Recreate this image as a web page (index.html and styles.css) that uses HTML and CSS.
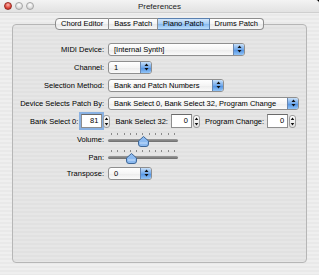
FILE: index.html
```html
<!DOCTYPE html>
<html lang="en">
<head>
  <meta charset="UTF-8">
  <title>Preferences</title>
  <link rel="stylesheet" href="styles.css">
</head>
<body>
  <div class="window">
    <div class="titlebar">
      <div class="lights">
        <span class="light close"></span>
        <span class="light"></span>
        <span class="light"></span>
      </div>
      <div class="title">Preferences</div>
      <div></div>
    </div>

    <div class="tabs">
      <div class="tab first">Chord Editor</div>
      <div class="tab">Bass Patch</div>
      <div class="tab selected">Piano Patch</div>
      <div class="tab last">Drums Patch</div>
    </div>

    <div class="panel">
      <div class="form">
        <label>MIDI Device:</label>
        <div class="popup w-device">
          <span>[Internal Synth]</span>
          <i class="cap"><svg width="5" height="8" viewBox="0 0 5 8"><path d="M2.5 0.5 L4.5 3 H0.5 Z M2.5 7.5 L4.5 5 H0.5 Z" fill="#111"/></svg></i>
        </div>

        <label>Channel:</label>
        <div class="popup w-small">
          <span>1</span>
          <i class="cap"><svg width="5" height="8" viewBox="0 0 5 8"><path d="M2.5 0.5 L4.5 3 H0.5 Z M2.5 7.5 L4.5 5 H0.5 Z" fill="#111"/></svg></i>
        </div>

        <label>Selection Method:</label>
        <div class="popup w-method">
          <span>Bank and Patch Numbers</span>
          <i class="cap"><svg width="5" height="8" viewBox="0 0 5 8"><path d="M2.5 0.5 L4.5 3 H0.5 Z M2.5 7.5 L4.5 5 H0.5 Z" fill="#111"/></svg></i>
        </div>

        <label>Device Selects Patch By:</label>
        <div class="popup w-wide">
          <span>Bank Select 0, Bank Select 32, Program Change</span>
          <i class="cap"><svg width="5" height="8" viewBox="0 0 5 8"><path d="M2.5 0.5 L4.5 3 H0.5 Z M2.5 7.5 L4.5 5 H0.5 Z" fill="#111"/></svg></i>
        </div>

        <div class="bank-row">
          <div class="spin">
            <label>Bank Select 0:</label>
            <div class="field focus">81</div>
            <div class="stepper"><svg width="5" height="11" viewBox="0 0 5 11"><path d="M2.5 1.5 L4.3 4 H0.7 Z M2.5 9.5 L4.3 7 H0.7 Z" fill="#111"/></svg></div>
          </div>
          <div class="spin">
            <label>Bank Select 32:</label>
            <div class="field">0</div>
            <div class="stepper"><svg width="5" height="11" viewBox="0 0 5 11"><path d="M2.5 1.5 L4.3 4 H0.7 Z M2.5 9.5 L4.3 7 H0.7 Z" fill="#111"/></svg></div>
          </div>
          <div class="spin">
            <label>Program Change:</label>
            <div class="field">0</div>
            <div class="stepper"><svg width="5" height="11" viewBox="0 0 5 11"><path d="M2.5 1.5 L4.3 4 H0.7 Z M2.5 9.5 L4.3 7 H0.7 Z" fill="#111"/></svg></div>
          </div>
        </div>

        <label>Volume:</label>
        <div class="slider">
          <div class="ticks"><b></b><b></b><b></b><b></b><b></b><b></b><b></b><b></b><b></b><b></b><b></b></div>
          <div class="track"></div>
          <svg class="knob" style="left: 30px" width="11" height="11" viewBox="0 0 11 11"><path d="M5.5 0.5 L10.5 5 V8 Q10.5 10.5 8 10.5 H3 Q0.5 10.5 0.5 8 V5 Z" fill="#8cbaf0" stroke="#3f6797"/><path d="M2 7 H9" stroke="#c9e0fb" stroke-width="1"/></svg>
        </div>

        <label>Pan:</label>
        <div class="slider">
          <div class="ticks"><b></b><b></b><b></b><b></b><b></b><b></b><b></b><b></b><b></b><b></b><b></b></div>
          <div class="track"></div>
          <svg class="knob" style="left: 18px" width="11" height="11" viewBox="0 0 11 11"><path d="M5.5 0.5 L10.5 5 V8 Q10.5 10.5 8 10.5 H3 Q0.5 10.5 0.5 8 V5 Z" fill="#8cbaf0" stroke="#3f6797"/><path d="M2 7 H9" stroke="#c9e0fb" stroke-width="1"/></svg>
        </div>

        <label>Transpose:</label>
        <div class="popup w-small">
          <span>0</span>
          <i class="cap"><svg width="5" height="8" viewBox="0 0 5 8"><path d="M2.5 0.5 L4.5 3 H0.5 Z M2.5 7.5 L4.5 5 H0.5 Z" fill="#111"/></svg></i>
        </div>
      </div>
    </div>
  </div>
</body>
</html>
```

FILE: styles.css
```css
* {
  box-sizing: border-box;
}

html,
body {
  margin: 0;
}

body {
  background: #000;
  font-family: 'Liberation Sans', Arial, sans-serif;
  font-size: 7.5px;
  color: #000;
}

.window {
  width: 319px;
  height: 275px;
  overflow: hidden;
  border-top-right-radius: 4px;
  background: repeating-linear-gradient(to bottom, #efefef 0 2px, #e9e9e9 2px 4px);
}

/* title bar */
.titlebar {
  height: 13px;
  display: grid;
  grid-template-columns: 1fr auto 1fr;
  align-items: center;
  background: linear-gradient(#f3f3f3, #e2e2e2);
  border-bottom: 1px solid #cfcfcf;
}

.lights {
  display: flex;
  gap: 3px;
  padding-left: 4px;
}

.light {
  width: 8px;
  height: 8px;
  border-radius: 50%;
  border: 1px solid #a4a4a4;
  background: radial-gradient(circle at 50% 30%, #ffffff, #dadada 65%, #bdbdbd);
}

.light.close {
  border-color: #952b22;
  background: radial-gradient(circle at 50% 30%, #ffb6ad, #df463b 60%, #a9251c);
}

.title {
  font-size: 8px;
  color: #222;
}

/* tabs */
.tabs {
  display: flex;
  justify-content: center;
  margin-top: 5px;
  height: 12px;
  position: relative;
  z-index: 1;
}

.tab {
  height: 12px;
  padding: 0 5px;
  line-height: 10px;
  white-space: nowrap;
  border: 1px solid #8d8d8d;
  border-left: none;
  background: linear-gradient(#ffffff, #f4f4f4 50%, #e7e7e7 51%, #f7f7f7);
}

.tab.first {
  border-left: 1px solid #8d8d8d;
  border-radius: 4px 0 0 4px;
}

.tab.last {
  border-radius: 0 4px 4px 0;
}

.tab.selected {
  border-color: #5b80ae;
  background: linear-gradient(#d3e7fc, #a2cbf4 50%, #84b7ee 51%, #bddffc);
}

/* panel */
.panel {
  margin: -6px 12px 0;
  height: 239px;
  padding-top: 15px;
  border: 1px solid #b6b6b6;
  border-radius: 4px;
  background: repeating-linear-gradient(to bottom, #e6e6e6 0 2px, #e1e1e1 2px 4px);
}

.form {
  display: grid;
  grid-template-columns: 91px 198px;
  grid-template-rows: repeat(5, 18px) 19px 16px 16px;
  column-gap: 4px;
  align-items: center;
  justify-items: start;
}

.form > label {
  justify-self: end;
  white-space: nowrap;
}

/* popup buttons */
.popup {
  height: 13px;
  display: flex;
  align-items: center;
  padding-left: 5px;
  border: 1px solid #8f8f8f;
  border-radius: 3px;
  overflow: hidden;
  white-space: nowrap;
  background: linear-gradient(#ffffff, #f5f5f5 50%, #ebebeb 51%, #fbfbfb);
}

.popup span {
  flex: 1;
}

.cap {
  width: 11px;
  height: 100%;
  display: flex;
  align-items: center;
  justify-content: center;
  border-left: 1px solid #6886b0;
  background: linear-gradient(#c8e0f9, #70a8ea 50%, #4d8fe2 51%, #92c4f6);
}

.w-device {
  width: 137px;
}

.w-small {
  width: 44px;
}

.w-method {
  width: 116px;
}

.w-wide {
  width: 191px;
}

/* bank select row */
.bank-row {
  grid-column: 1 / -1;
  display: flex;
  align-items: center;
  gap: 5px;
  padding-left: 17px;
}

.spin {
  display: flex;
  align-items: center;
  white-space: nowrap;
}

.spin label {
  margin-right: 3px;
}

.field {
  width: 21px;
  height: 14px;
  padding-right: 3px;
  line-height: 12px;
  text-align: right;
  background: #fff;
  border: 1px solid #8e8e8e;
  border-top-color: #6a6a6a;
}

.field.focus {
  box-shadow: 0 0 0 2px #89b1e2;
}

.stepper {
  width: 7px;
  height: 13px;
  margin-left: 1px;
  display: flex;
  align-items: center;
  justify-content: center;
  border: 1px solid #9c9c9c;
  border-radius: 3px;
  background: linear-gradient(#ffffff, #e2e2e2);
}

/* sliders */
.slider {
  width: 70px;
  height: 14px;
  position: relative;
}

.ticks {
  display: flex;
  justify-content: space-between;
  padding: 0 3px;
}

.ticks b {
  display: block;
  width: 1px;
  height: 2px;
  background: #8a8a8a;
}

.track {
  height: 3px;
  margin-top: 4px;
  border-radius: 2px;
  background: linear-gradient(#9c9c9c, #6c6c6c);
}

.knob {
  position: absolute;
  top: 3px;
}
```
